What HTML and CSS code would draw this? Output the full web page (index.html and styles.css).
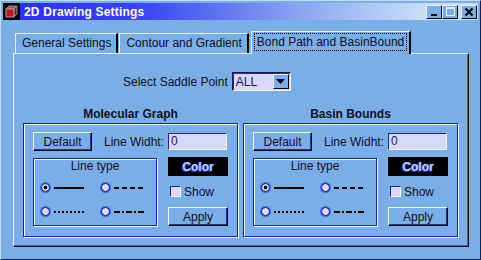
FILE: index.html
```html
<!DOCTYPE html>
<html>
<head lang="en">
    <meta charset="UTF-8">
    <title>2D Drawing Settings</title>
    <link rel="stylesheet" href="styles.css">
</head>
<body>
<div class="window">
    <div class="titlebar">
        <span class="app-icon">
            <svg width="17" height="17" viewBox="0 0 17 17">
                <rect x="0" y="0" width="17" height="17" fill="#000"/>
                <polygon points="3,6 6,3 14,3 11,6" fill="#e04040" stroke="#909090" stroke-width="1"/>
                <polygon points="11,6 14,3 14,11 11,14" fill="#900c0c" stroke="#909090" stroke-width="1"/>
                <rect x="3" y="6" width="8" height="8" fill="#d01414" stroke="#a0a0a0" stroke-width="1"/>
            </svg>
        </span>
        <span class="title">2D Drawing Settings</span>
        <div class="win-btns">
            <span class="wbtn"><svg width="14" height="12" viewBox="0 0 14 12"><rect x="4" y="8" width="6" height="2" fill="#000"/></svg></span>
            <span class="wbtn"><svg width="14" height="12" viewBox="0 0 14 12"><rect x="3.5" y="1.5" width="8" height="8" fill="none" stroke="#e8f0ff"/><rect x="3" y="1" width="9" height="2" fill="#e8f0ff"/></svg></span>
            <span class="wbtn close"><svg width="14" height="12" viewBox="0 0 14 12"><path d="M3.5 2.5 L10.5 9.5 M10.5 2.5 L3.5 9.5" stroke="#000" stroke-width="2"/></svg></span>
        </div>
    </div>

    <div class="tabs">
        <span class="tab">General Settings</span>
        <span class="tab">Contour and Gradient</span>
        <span class="tab active"><span class="focus">Bond Path and BasinBound</span></span>
    </div>

    <div class="panel">
        <div class="saddle-row">
            <span>Select Saddle Point</span>
            <span class="combo">
                <span class="combo-val">ALL</span>
                <span class="combo-btn"><svg width="9" height="5" viewBox="0 0 9 5"><polygon points="0,0 9,0 4.5,5" fill="#000"/></svg></span>
            </span>
        </div>

        <div class="groups">
            <section class="group">
                <h3>Molecular Graph</h3>
                <div class="group-box">
                    <div class="row-top">
                        <span class="btn">Default</span>
                        <span class="lw-label">Line Widht:</span>
                        <span class="input">0</span>
                    </div>
                    <div class="row-main">
                        <div class="linetype">
                            <div class="lt-title">Line type</div>
                            <div class="lt-grid">
                                <span class="lt-item"><span class="radio on"></span><svg width="30" height="2"><line x1="0" y1="1" x2="30" y2="1" stroke="#000" stroke-width="2"/></svg></span>
                                <span class="lt-item"><span class="radio"></span><svg width="30" height="2"><line x1="0" y1="1" x2="30" y2="1" stroke="#000" stroke-width="2" stroke-dasharray="5 3"/></svg></span>
                                <span class="lt-item"><span class="radio"></span><svg width="30" height="2"><line x1="0" y1="1" x2="30" y2="1" stroke="#000" stroke-width="2" stroke-dasharray="2 2"/></svg></span>
                                <span class="lt-item"><span class="radio"></span><svg width="30" height="2"><line x1="0" y1="1" x2="30" y2="1" stroke="#000" stroke-width="2" stroke-dasharray="6 2 2 2"/></svg></span>
                            </div>
                        </div>
                        <div class="side">
                            <span class="color-btn">Color</span>
                            <label class="check"><span class="box"></span>Show</label>
                            <span class="btn apply">Apply</span>
                        </div>
                    </div>
                </div>
            </section>

            <section class="group">
                <h3>Basin Bounds</h3>
                <div class="group-box">
                    <div class="row-top">
                        <span class="btn">Default</span>
                        <span class="lw-label">Line Widht:</span>
                        <span class="input">0</span>
                    </div>
                    <div class="row-main">
                        <div class="linetype">
                            <div class="lt-title">Line type</div>
                            <div class="lt-grid">
                                <span class="lt-item"><span class="radio on"></span><svg width="30" height="2"><line x1="0" y1="1" x2="30" y2="1" stroke="#000" stroke-width="2"/></svg></span>
                                <span class="lt-item"><span class="radio"></span><svg width="30" height="2"><line x1="0" y1="1" x2="30" y2="1" stroke="#000" stroke-width="2" stroke-dasharray="5 3"/></svg></span>
                                <span class="lt-item"><span class="radio"></span><svg width="30" height="2"><line x1="0" y1="1" x2="30" y2="1" stroke="#000" stroke-width="2" stroke-dasharray="2 2"/></svg></span>
                                <span class="lt-item"><span class="radio"></span><svg width="30" height="2"><line x1="0" y1="1" x2="30" y2="1" stroke="#000" stroke-width="2" stroke-dasharray="6 2 2 2"/></svg></span>
                            </div>
                        </div>
                        <div class="side">
                            <span class="color-btn">Color</span>
                            <label class="check"><span class="box"></span>Show</label>
                            <span class="btn apply">Apply</span>
                        </div>
                    </div>
                </div>
            </section>
        </div>
    </div>
</div>
</body>
</html>
```

FILE: styles.css
```css
*{
    margin: 0;
    padding: 0;
    box-sizing: border-box;
}
body{
    font-family: "Liberation Sans", Arial, sans-serif;
    font-size: 12px;
    color: #101028;
    background: #7aaee6;
}
.window{
    width: 481px;
    height: 260px;
    background: #7aaee6;
    border: 1px solid;
    border-color: #c4dcfa #14224e #14224e #c4dcfa;
    padding: 2px;
}
/* title bar */
.titlebar{
    height: 17px;
    display: flex;
    align-items: center;
    background: linear-gradient(to right, #2a2cf2 0%, #3a46f4 30%, #8aa4f0 62%, #c6def8 88%, #c6def8 100%);
}
.app-icon{
    width: 18px;
    height: 17px;
    display: flex;
}
.title{
    margin-left: 3px;
    color: #fff;
    font-weight: bold;
    font-size: 12px;
    letter-spacing: 0.2px;
}
.win-btns{
    margin-left: auto;
    display: flex;
    margin-right: 1px;
}
.wbtn{
    width: 16px;
    height: 14px;
    display: flex;
    align-items: center;
    justify-content: center;
    background: #7aaee6;
    border: 1px solid;
    border-color: #e8f2ff #000 #000 #e8f2ff;
}
.wbtn.close{
    margin-left: 3px;
}
/* tabs */
.tabs{
    display: flex;
    align-items: flex-end;
    height: 22px;
    margin-top: 11px;
    padding-left: 12px;
}
.tab{
    height: 20px;
    line-height: 18px;
    padding: 0 5px 0 6px;
    border-top: 1px solid #e8f4ff;
    border-left: 1px solid #e8f4ff;
    border-right: 2px solid #000;
    margin-right: 1px;
}
.tab.active{
    height: 23px;
    margin-bottom: -1px;
    padding: 2px 3px 0 3px;
    position: relative;
    z-index: 2;
    background: #7aaee6;
    margin-left: 1px;
}
.tab .focus{
    display: block;
    line-height: 16px;
    padding: 0 2px;
    outline: 1px dotted #000;
    outline-offset: 0;
}
/* main panel */
.panel{
    width: 456px;
    height: 194px;
    margin-left: 10px;
    border: 1px solid;
    border-color: #e8f4ff #000 #000 #e8f4ff;
    box-shadow: inset -1px -1px 0 #3c6cb8;
    padding: 18px 0 0 9px;
}
.saddle-row{
    display: flex;
    align-items: center;
    height: 19px;
    padding-left: 100px;
    gap: 4px;
}
.combo{
    width: 59px;
    height: 19px;
    display: flex;
    align-items: center;
    background: #d8d8ff;
    border: 1px solid;
    border-color: #1a1a40 #f0f6ff #f0f6ff #1a1a40;
    box-shadow: inset 1px 1px 0 #1c3a98;
}
.combo-val{
    flex: 1;
    padding-left: 3px;
    color: #14185a;
}
.combo-btn{
    width: 16px;
    height: 15px;
    margin-right: 1px;
    display: flex;
    align-items: center;
    justify-content: center;
    background: #7aaee6;
    border: 1px solid;
    border-color: #e8f2ff #000 #000 #e8f2ff;
}
.groups{
    display: grid;
    grid-template-columns: 215px 215px;
    column-gap: 5px;
    margin-top: 15px;
}
.group h3{
    font-size: 12px;
    font-weight: bold;
    text-align: center;
    height: 17px;
    line-height: 17px;
}
.group-box{
    height: 114px;
    border: 1px solid #0c2a9c;
    box-shadow: inset 1px 1px 0 #f4f8ff, 1px 1px 0 #f4f8ff;
    padding: 8px 0 0 9px;
}
.row-top{
    display: flex;
    align-items: center;
    height: 19px;
}
.btn{
    display: flex;
    align-items: center;
    justify-content: center;
    width: 59px;
    height: 19px;
    background: #7aaee6;
    border: 1px solid;
    border-color: #f0f8ff #000 #000 #f0f8ff;
    box-shadow: inset -1px -1px 0 #1c3a90;
}
.lw-label{
    margin-left: 12px;
}
.input{
    width: 59px;
    height: 17px;
    margin-left: 4px;
    line-height: 15px;
    padding-left: 2px;
    background: #d8d8ff;
    border: 1px solid;
    border-color: #1c2c80 #f4f8ff #f4f8ff #1c2c80;
    color: #14185a;
}
.row-main{
    display: flex;
    margin-top: 6px;
    gap: 11px;
}
.linetype{
    width: 124px;
    height: 68px;
    margin-top: 1px;
    border: 1px solid #0c2a9c;
    box-shadow: inset 1px 1px 0 #f4f8ff, 1px 1px 0 #f4f8ff;
    padding-left: 7px;
}
.lt-title{
    text-align: center;
    line-height: 15px;
    margin-left: -7px;
}
.lt-grid{
    display: grid;
    grid-template-columns: 43px 43px;
    column-gap: 17px;
    row-gap: 15px;
    margin-top: 9px;
}
.lt-item{
    display: flex;
    align-items: center;
    gap: 4px;
    height: 9px;
}
.radio{
    width: 9px;
    height: 9px;
    border-radius: 50%;
    background: #dcdcff;
    border: 1px solid #0a1a70;
    box-shadow: 0 0 0 1px #3e6ee0;
    flex: none;
}
.radio.on{
    background: radial-gradient(circle, #000 0, #000 1.6px, #dcdcff 2.2px);
}
.side{
    width: 60px;
    display: flex;
    flex-direction: column;
}
.color-btn{
    height: 19px;
    background: #000;
    display: flex;
    align-items: center;
    justify-content: center;
    font-weight: bold;
    font-size: 12px;
    color: #c8d0ff;
    text-shadow: -1px 1px 0 #1c48e0, 1px 0 0 #1c3cc0;
}
.check{
    display: flex;
    align-items: center;
    gap: 3px;
    height: 11px;
    margin: 10px 0 0 2px;
}
.check .box{
    width: 11px;
    height: 11px;
    background: #d8d8ff;
    border: 1px solid;
    border-color: #1c2c80 #f4f8ff #f4f8ff #1c2c80;
}
.apply{
    margin-top: 10px;
    width: 60px;
}
```
